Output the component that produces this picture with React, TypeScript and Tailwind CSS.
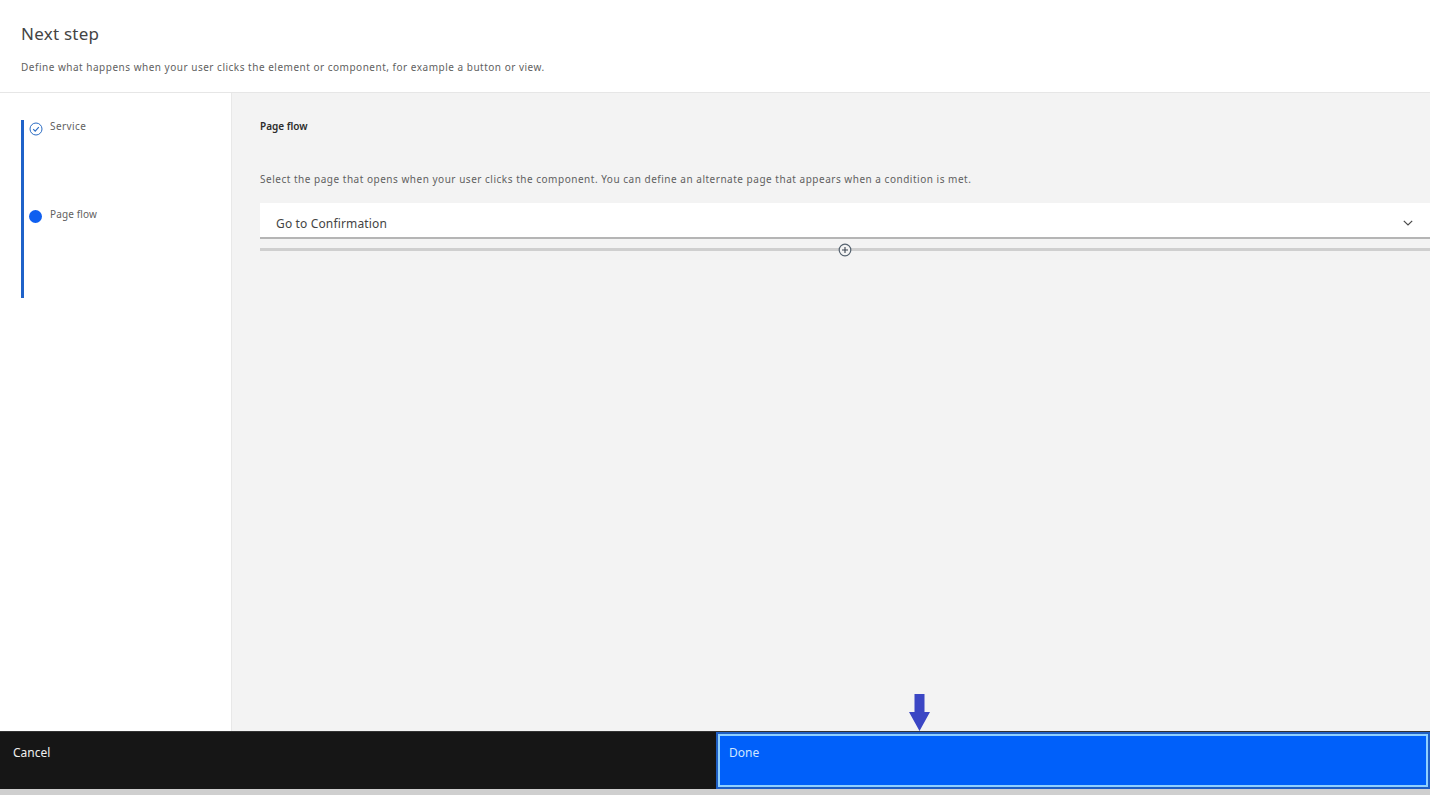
export default function App() {
  const font = { fontFamily: '"Noto Sans", "Open Sans", sans-serif' };
  return (
    <div style={font} className="relative flex h-[795px] w-[1430px] flex-col overflow-hidden bg-white">
      <header className="h-[93px] shrink-0 border-b border-[#e6e6e6] pl-[21px] pt-[23px]">
        <h1 className="text-[17px] leading-[22px] tracking-[0.25px] text-[#444444]">Next step</h1>
        <p className="mt-[15px] text-[10px] leading-[14px] tracking-[0.505px] text-[#5f5f5f]">
          Define what happens when your user clicks the element or component, for example a button or view.
        </p>
      </header>

      <div className="flex min-h-0 flex-1">
        <aside className="w-[232px] shrink-0 border-r border-[#e8e8e8] pl-[21px] pt-[27px]">
          <div className="h-[178px] border-l-[3px] border-[#1f62c9] pl-[5px]">
            <div className="flex h-[88px] items-start gap-[7px]">
              <svg className="mt-[2px] shrink-0" width="14" height="14" viewBox="0 0 14 14" fill="none">
                <circle cx="7" cy="7" r="6" stroke="#2a6cc4" strokeWidth="1" />
                <path d="M4.2 7.2 6.2 9.2l3.6-4" stroke="#2a6cc4" strokeWidth="1.1" />
              </svg>
              <span className="mt-[-1px] text-[10px] leading-[14px] tracking-[0.42px] text-[#5f5f5f]">Service</span>
            </div>
            <div className="flex items-start gap-[8px]">
              <span className="mt-[2px] h-[13px] w-[13px] shrink-0 rounded-full bg-[#0f5ff0]" />
              <span className="mt-[-1px] text-[10px] leading-[14px] tracking-[0.12px] text-[#5f5f5f]">Page flow</span>
            </div>
          </div>
        </aside>

        <main className="min-w-0 flex-1 bg-[#f3f3f3] pl-[28px] pt-[27px]">
          <h2 className="mt-[-1px] text-[10px] font-semibold leading-[14px] text-[#2c2c2c]">Page flow</h2>
          <p className="mt-[39px] text-[10px] leading-[14px] tracking-[0.515px] text-[#5f5f5f]">
            Select the page that opens when your user clicks the component. You can define an alternate page that appears when a condition is met.
          </p>
          <div className="mt-[17px] flex h-[36px] items-center justify-between border-b-2 border-[#b5b5b5] bg-white pl-[16px] pr-[15px] pt-[7px]">
            <span className="text-[12px] tracking-[0.15px] text-[#444444]">Go to Confirmation</span>
            <svg className="mt-[-1px]" width="14" height="14" viewBox="0 0 14 14" fill="none">
              <path d="M2.8 4.8 7 9l4.2-4.2" stroke="#4a4a4a" strokeWidth="1.2" />
            </svg>
          </div>
          <div className="relative mt-[9px] h-[3px] bg-[#cfcfcf]">
            <svg className="absolute left-[578px] top-[-5px]" width="14" height="14" viewBox="0 0 14 14" fill="none">
              <circle cx="7" cy="7" r="5.8" fill="#f3f3f3" stroke="#55626f" strokeWidth="1.2" />
              <path d="M7 4v6M4 7h6" stroke="#3a4450" strokeWidth="1.1" />
            </svg>
          </div>
        </main>
      </div>

      <footer className="flex h-[64px] shrink-0 flex-col bg-[#cfcfcf]">
        <div className="flex h-[58px] border-t border-[#333]">
          <div className="w-[716px] shrink-0 bg-[#161616] pl-[13px] pt-[13px] text-[12px] leading-[16px] text-[#f0f0f0]">Cancel</div>
          <div className="flex-1 border-2 border-[#1f5fc4] bg-[#0060fa] outline outline-2 -outline-offset-4 outline-[#8fd0ff]">
            <div className="pl-[11px] pt-[11px] text-[12px] leading-[16px] text-[#cfe6ff]">Done</div>
          </div>
        </div>
      </footer>

      <svg className="absolute left-[909px] top-[694px]" width="21" height="37" viewBox="0 0 21 37">
        <path d="M5.5 0h10v18h5.5L10.5 37 0 18h5.5z" fill="#3b46c4" />
      </svg>
    </div>
  );
}
